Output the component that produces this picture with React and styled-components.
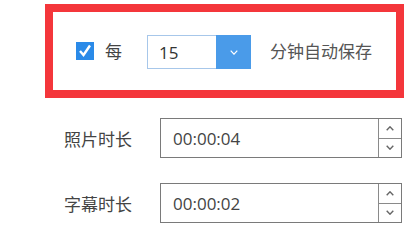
import { createGlobalStyle, styled } from "styled-components";

const GlobalStyle = createGlobalStyle`
  html, body {
    margin: 0;
    padding: 0;
    background: #fff;
  }
  body {
    font-family: "Open Sans", "Noto Sans CJK SC", sans-serif;
    color: #444;
  }
`;

const Page = styled.div`
  width: 408px;
  height: 223px;
  overflow: hidden;
  padding: 4px 0 0 0;
  box-sizing: border-box;
`;

const Highlight = styled.div`
  margin-left: 45px;
  width: 359px;
  height: 94px;
  box-sizing: border-box;
  border: 8px solid #f4363b;
  display: flex;
  align-items: center;
  padding: 2px 0 0 23px;
`;

const Check = styled.span`
  width: 18px;
  height: 18px;
  background: #2a8ae8;
  display: flex;
  align-items: center;
  justify-content: center;
  margin-top: -2px;
`;

const Text = styled.span`
  font-size: 17px;
  line-height: 20px;
  color: ${(p) => p.$color || "#444"};
  margin-left: ${(p) => p.$ml || 0}px;
  white-space: nowrap;
`;

const Combo = styled.div`
  display: flex;
  width: 104px;
  height: 34px;
  box-sizing: border-box;
  border: 1px solid #a7c7ea;
  margin-left: 25px;
`;

const ComboValue = styled.div`
  flex: 1;
  display: flex;
  align-items: center;
  padding-left: 11px;
  font-size: 17px;
  color: #333;
`;

const DropButton = styled.div`
  width: 35px;
  margin: -1px -1px -1px 0;
  background: #4a9be9;
  display: flex;
  align-items: center;
  justify-content: center;
`;

const Form = styled.div`
  display: grid;
  grid-template-columns: 132px 242px;
  column-gap: 28px;
  row-gap: 25px;
  margin-top: 20px;
  align-items: center;
`;

const Label = styled.span`
  font-size: 17px;
  color: #444;
  text-align: right;
`;

const Spin = styled.div`
  display: flex;
  height: 40px;
  box-sizing: border-box;
  border: 1px solid #7a7a7a;
`;

const SpinValue = styled.div`
  flex: 1;
  display: flex;
  align-items: center;
  padding-left: 12px;
  font-size: 17px;
  color: #444;
`;

const SpinButtons = styled.div`
  width: 22px;
  border-left: 1px solid #8a8a8a;
  display: flex;
  flex-direction: column;
`;

const SpinButton = styled.div`
  flex: 1;
  display: flex;
  align-items: center;
  justify-content: center;
  & + & {
    border-top: 1px solid #8a8a8a;
  }
`;

const Chevron = ({ up, color, w = 8, h = 5, sw = 1.4 }) => (
  <svg width={w} height={h} viewBox={`0 0 ${w} ${h}`}>
    <polyline
      points={
        up
          ? `0.7,${h - 0.7} ${w / 2},0.8 ${w - 0.7},${h - 0.7}`
          : `0.7,0.7 ${w / 2},${h - 0.8} ${w - 0.7},0.7`
      }
      fill="none"
      stroke={color}
      strokeWidth={sw}
    />
  </svg>
);

const SpinBox = ({ value }) => (
  <Spin>
    <SpinValue>{value}</SpinValue>
    <SpinButtons>
      <SpinButton>
        <Chevron up color="#666" />
      </SpinButton>
      <SpinButton>
        <Chevron color="#666" />
      </SpinButton>
    </SpinButtons>
  </Spin>
);

const App = () => (
  <Page>
    <GlobalStyle />
    <Highlight>
      <Check>
        <svg width="14" height="14" viewBox="0 0 14 14">
          <polyline
            points="2,7 5.5,11 12,1.5"
            fill="none"
            stroke="#fff"
            strokeWidth="2.4"
          />
        </svg>
      </Check>
      <Text $ml={11}>每</Text>
      <Combo>
        <ComboValue>15</ComboValue>
        <DropButton>
          <Chevron color="#fff" w={8} h={5} sw={1.2} />
        </DropButton>
      </Combo>
      <Text $ml={19} $color="#555">分钟自动保存</Text>
    </Highlight>
    <Form>
      <Label>照片时长</Label>
      <SpinBox value="00:00:04" />
      <Label>字幕时长</Label>
      <SpinBox value="00:00:02" />
    </Form>
  </Page>
);

export default App;
